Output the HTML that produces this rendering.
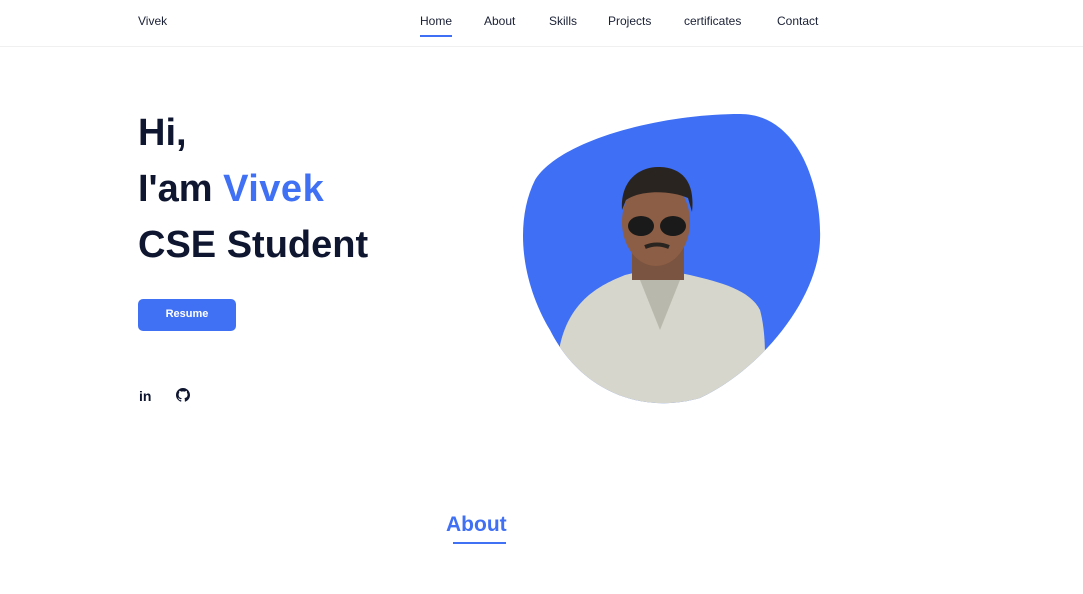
<!DOCTYPE html>
<html><head><meta charset="utf-8"><style>
*{margin:0;padding:0;box-sizing:border-box}
body{width:1083px;height:594px;overflow:hidden;background:#fff;font-family:"Liberation Sans",sans-serif;color:#0e1630;position:relative}
.hdr{position:absolute;left:0;top:0;width:1083px;height:47px;border-bottom:1px solid #f0f0f0;background:#fff}
.logo{position:absolute;left:138px;top:14px;font-size:12px;color:#1a2035}
.nav a{position:absolute;top:14px;font-size:12px;color:#1a2035;text-decoration:none}
.ul{position:absolute;left:420px;top:35px;width:32px;height:2px;background:#3e6ff4}
h1{position:absolute;left:138px;font-size:38px;font-weight:bold;line-height:56px;letter-spacing:0}
.btn{position:absolute;left:138px;top:299px;width:98px;height:32px;background:#4070f4;border-radius:5px;color:#fff;font-size:11px;font-weight:bold;text-align:center;line-height:31px}
.about{position:absolute;left:446px;top:513px;font-size:21px;font-weight:bold;color:#4070f4}
.aul{position:absolute;left:453px;top:542px;width:53px;height:2px;background:#4070f4}
</style></head><body>
<div class="hdr"></div>
<div class="logo">Vivek</div>
<div class="nav">
<a style="left:420px">Home</a><a style="left:484px">About</a><a style="left:549px">Skills</a><a style="left:608px">Projects</a><a style="left:684px">certificates</a><a style="left:777px">Contact</a>
</div>
<div class="ul"></div>
<h1 style="top:105px">Hi,</h1>
<h1 style="top:161px">I'am <span style="color:#4070f4;letter-spacing:0.5px">Vivek</span></h1>
<h1 style="top:217px">CSE Student</h1>
<div class="btn">Resume</div>
<div style="position:absolute;left:139px;top:388px;font-size:14px;font-weight:bold">in</div>
<svg style="position:absolute;left:176px;top:388px" width="14" height="14" viewBox="0 0 16 16"><path fill="#0e1630" d="M8 0C3.6 0 0 3.6 0 8c0 3.5 2.3 6.5 5.5 7.6.4.1.5-.2.5-.4v-1.4c-2.2.5-2.7-1-2.7-1-.4-.9-.9-1.2-.9-1.2-.7-.5.1-.5.1-.5.8.1 1.2.8 1.2.8.7 1.3 1.9.9 2.4.7.1-.5.3-.9.5-1.1-1.8-.2-3.6-.9-3.6-4 0-.9.3-1.6.8-2.1-.1-.2-.4-1 .1-2.1 0 0 .7-.2 2.2.8.6-.2 1.300-.3 2-.3s1.4.1 2 .3c1.5-1 2.2-.8 2.2-.8.4 1.1.2 1.9.1 2.1.5.6.8 1.3.8 2.1 0 3.1-1.9 3.7-3.6 3.9.3.3.5.8.5 1.5v2.2c0 .2.1.5.6.4C13.7 14.5 16 11.5 16 8c0-4.4-3.6-8-8-8z"/></svg>
<svg style="position:absolute;left:515px;top:110px" width="310" height="300" viewBox="515 110 310 300">
<defs><clipPath id="c"><path d="M740 114C800 114 822 190 820 240C818 300 760 370 700 398C640 415 580 390 550 330C520 280 515 220 535 180C560 140 660 114 740 114Z"/></clipPath></defs>
<path fill="#3e6ff4" d="M740 114C800 114 822 190 820 240C818 300 760 370 700 398C640 415 580 390 550 330C520 280 515 220 535 180C560 140 660 114 740 114Z"/>
<g clip-path="url(#c)">
<path fill="#d6d6cc" d="M560 345C570 300 600 285 625 275L655 268L690 275C720 282 750 290 760 310C768 340 765 380 760 410L560 410Z"/>
<path fill="#b8b8ac" d="M640 280L660 330L680 280Z"/>
<rect x="632" y="240" width="52" height="40" fill="#7a5440"/>
<ellipse cx="656" cy="222" rx="34" ry="44" fill="#8c5e45"/>
<path fill="#2a2420" d="M622 210C620 180 640 166 660 167C685 168 695 185 692 212L688 198C670 190 640 190 626 200Z"/>
<ellipse cx="641" cy="226" rx="13" ry="10" fill="#1a1a1a"/><ellipse cx="673" cy="226" rx="13" ry="10" fill="#1a1a1a"/>
<path d="M645 247Q657 242 669 247" stroke="#2a2420" stroke-width="4" fill="none"/>
</g>
</svg>
<div class="about">About</div>
<div class="aul"></div>
</body></html>
